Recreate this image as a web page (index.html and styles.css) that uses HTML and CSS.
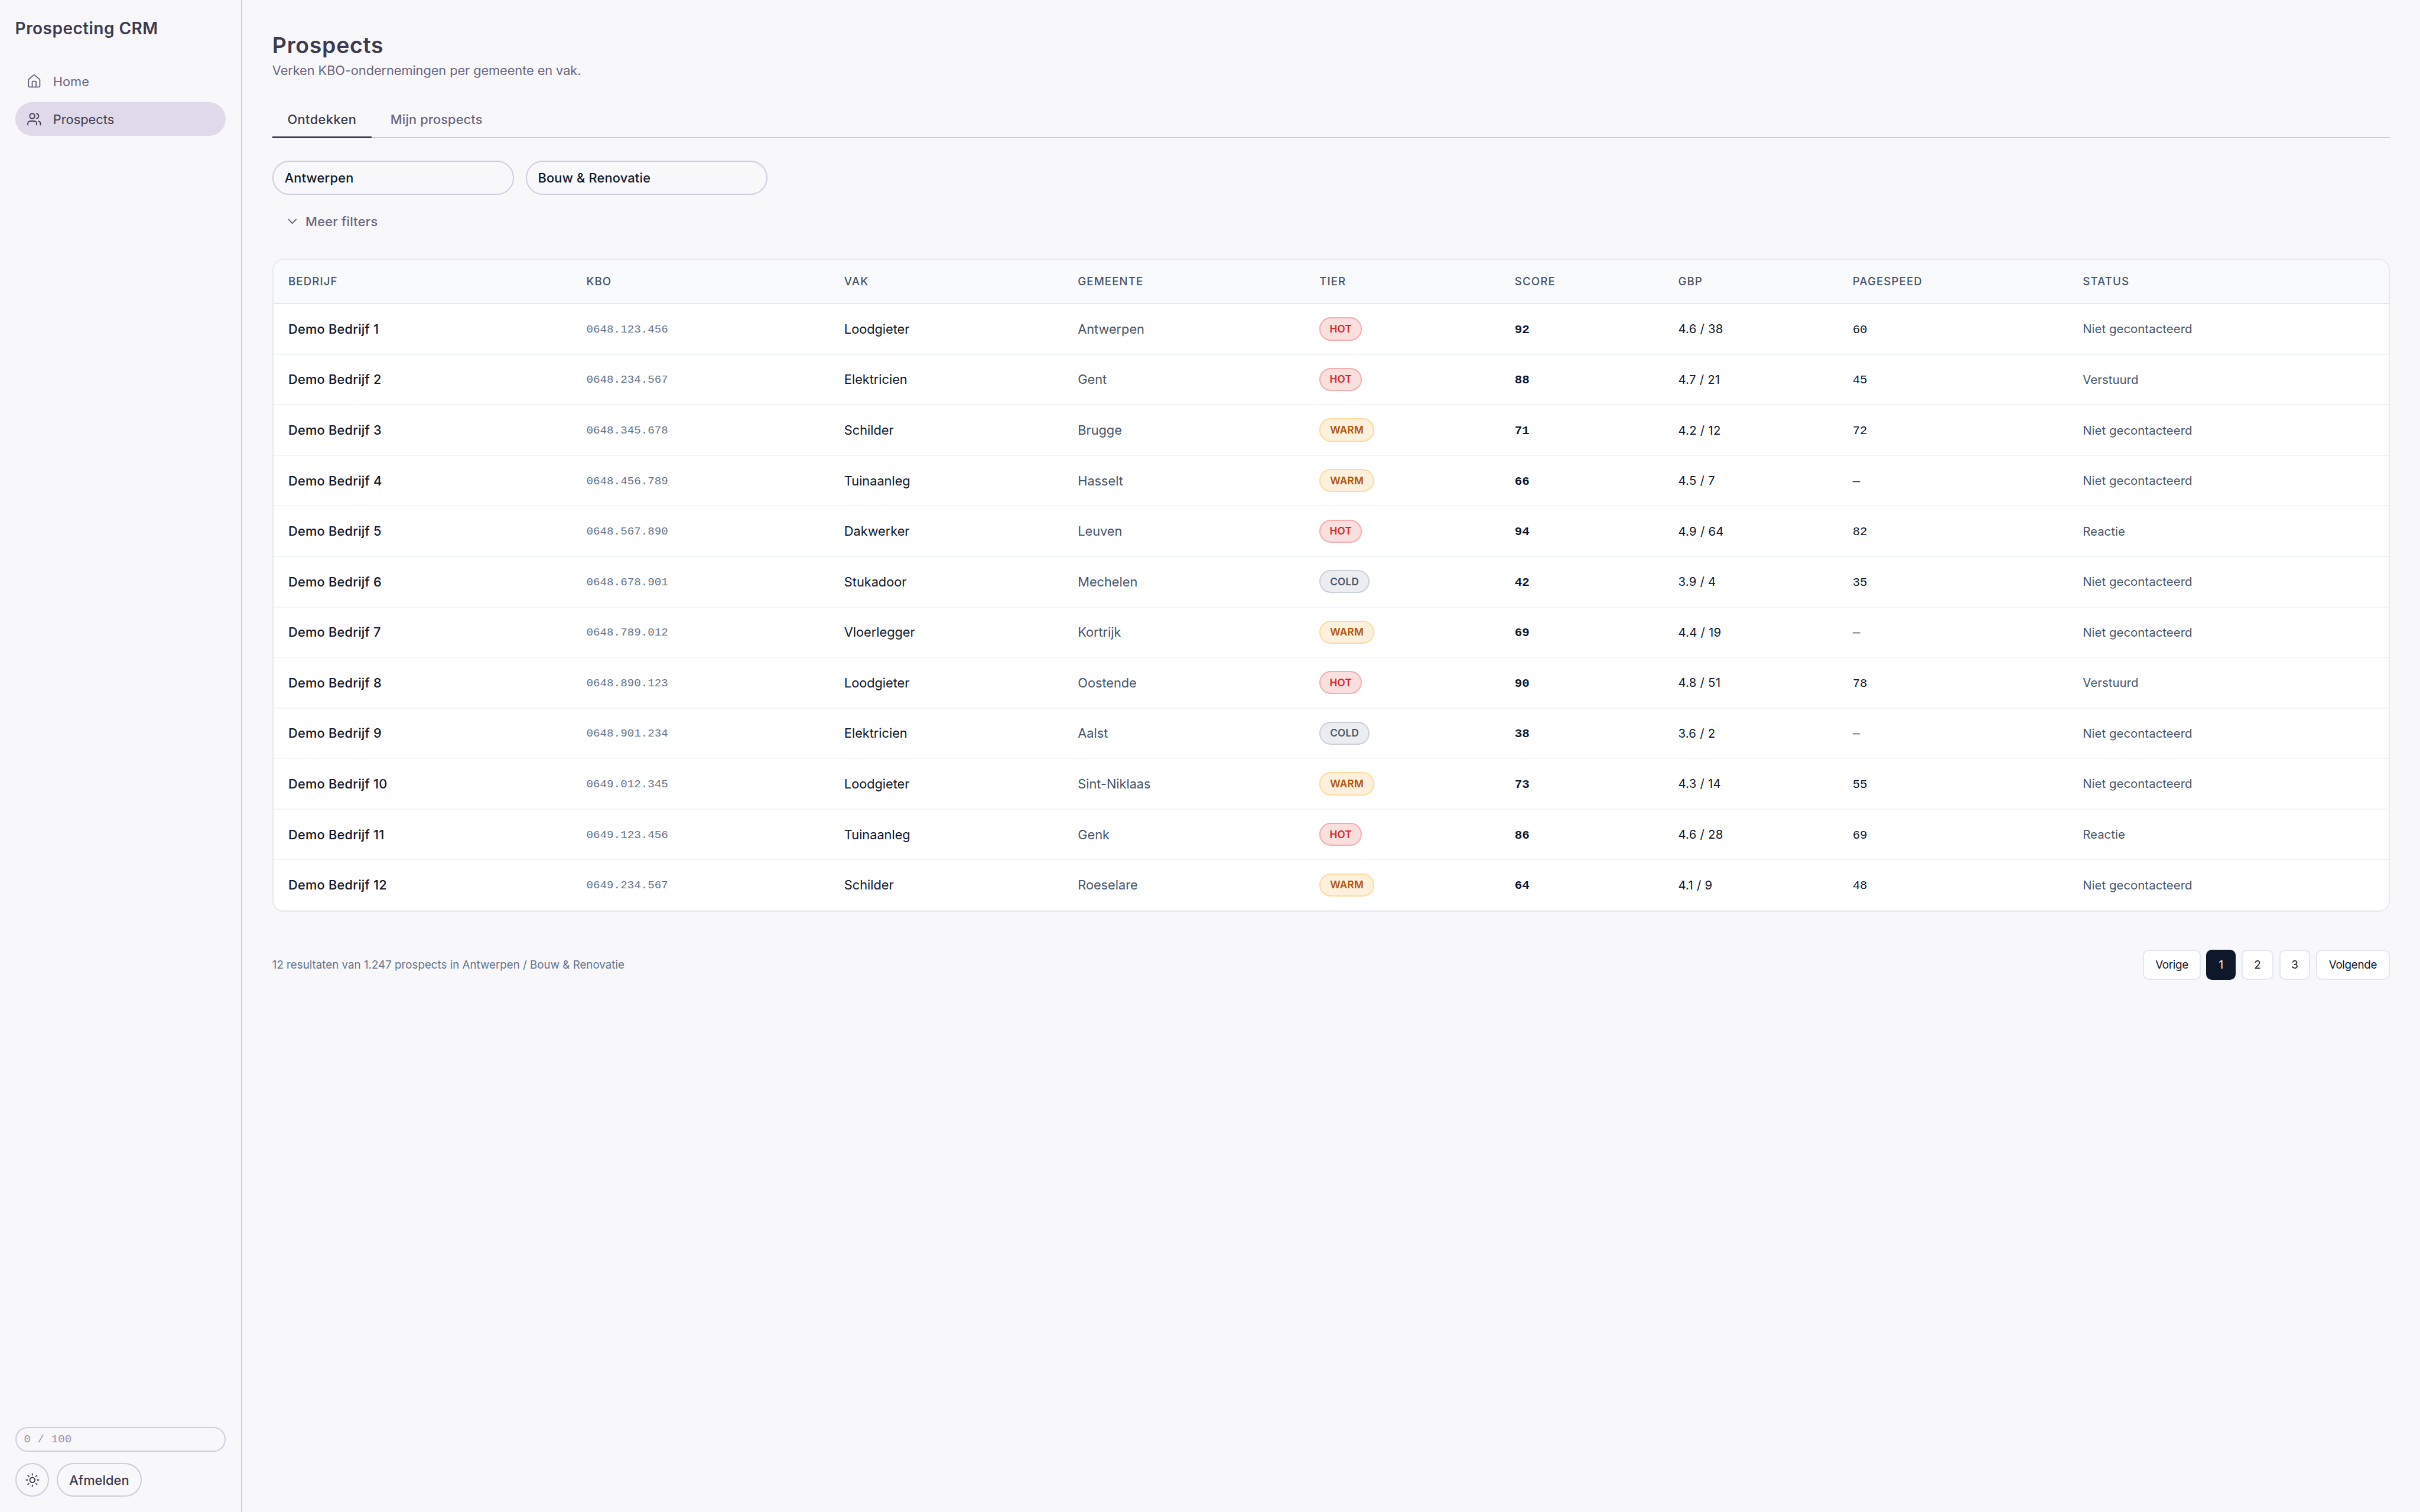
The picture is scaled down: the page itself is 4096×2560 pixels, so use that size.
FILE: index.html
```
<!DOCTYPE html>
<html lang="nl">
<head>
<meta charset="utf-8">
<title>Prospecting CRM</title>
<link rel="stylesheet" href="styles.css">
</head>
<body>
<div class="app">
  <aside class="sidebar">
    <div class="brand">Prospecting CRM</div>
    <nav class="nav">
      <a class="nav-item">
        <svg class="icon" viewBox="0 0 24 24"><path d="M15 21v-8a1 1 0 0 0-1-1h-4a1 1 0 0 0-1 1v8"/><path d="M3 10a2 2 0 0 1 .709-1.528l7-5.999a2 2 0 0 1 2.582 0l7 5.999A2 2 0 0 1 21 10v9a2 2 0 0 1-2 2H5a2 2 0 0 1-2-2z"/></svg>
        <span>Home</span>
      </a>
      <a class="nav-item nav-item--active">
        <svg class="icon" viewBox="0 0 24 24"><path d="M16 21v-2a4 4 0 0 0-4-4H6a4 4 0 0 0-4 4v2"/><circle cx="9" cy="7" r="4"/><path d="M22 21v-2a4 4 0 0 0-3-3.87"/><path d="M16 3.13a4 4 0 0 1 0 7.75"/></svg>
        <span>Prospects</span>
      </a>
    </nav>
    <div class="sidebar-foot">
      <div class="quota">0 / 100</div>
      <div class="actions">
        <button class="btn btn--round" aria-label="Thema">
          <svg class="icon" viewBox="0 0 24 24"><circle cx="12" cy="12" r="4"/><path d="M12 2v2M12 20v2M4.93 4.93l1.41 1.41M17.66 17.66l1.41 1.41M2 12h2M20 12h2M6.34 17.66l-1.41 1.41M19.07 4.93l-1.41 1.41"/></svg>
        </button>
        <button class="btn btn--logout">Afmelden</button>
      </div>
    </div>
  </aside>

  <main class="main">
    <h1 class="title">Prospects</h1>
    <p class="subtitle">Verken KBO-ondernemingen per gemeente en vak.</p>

    <div class="tabs">
      <div class="tab tab--active">Ontdekken</div>
      <div class="tab">Mijn prospects</div>
    </div>

    <div class="filters">
      <div class="select">Antwerpen</div>
      <div class="select">Bouw &amp; Renovatie</div>
    </div>
    <div class="more">
      <svg class="icon" viewBox="0 0 24 24"><path d="m6 9 6 6 6-6"/></svg>
      <span>Meer filters</span>
    </div>

    <section class="table">
      <div class="row row--head"><div>BEDRIJF</div><div>KBO</div><div>VAK</div><div>GEMEENTE</div><div>TIER</div><div>SCORE</div><div>GBP</div><div>PAGESPEED</div><div>STATUS</div></div>
      <div class="row"><div class="name">Demo Bedrijf 1</div><div class="kbo">0648.123.456</div><div class="vak">Loodgieter</div><div class="city">Antwerpen</div><div><span class="badge hot">HOT</span></div><div class="score">92</div><div class="gbp">4.6 / 38</div><div class="speed">60</div><div class="status">Niet gecontacteerd</div></div>
      <div class="row"><div class="name">Demo Bedrijf 2</div><div class="kbo">0648.234.567</div><div class="vak">Elektricien</div><div class="city">Gent</div><div><span class="badge hot">HOT</span></div><div class="score">88</div><div class="gbp">4.7 / 21</div><div class="speed">45</div><div class="status">Verstuurd</div></div>
      <div class="row"><div class="name">Demo Bedrijf 3</div><div class="kbo">0648.345.678</div><div class="vak">Schilder</div><div class="city">Brugge</div><div><span class="badge warm">WARM</span></div><div class="score">71</div><div class="gbp">4.2 / 12</div><div class="speed">72</div><div class="status">Niet gecontacteerd</div></div>
      <div class="row"><div class="name">Demo Bedrijf 4</div><div class="kbo">0648.456.789</div><div class="vak">Tuinaanleg</div><div class="city">Hasselt</div><div><span class="badge warm">WARM</span></div><div class="score">66</div><div class="gbp">4.5 / 7</div><div class="speed">—</div><div class="status">Niet gecontacteerd</div></div>
      <div class="row"><div class="name">Demo Bedrijf 5</div><div class="kbo">0648.567.890</div><div class="vak">Dakwerker</div><div class="city">Leuven</div><div><span class="badge hot">HOT</span></div><div class="score">94</div><div class="gbp">4.9 / 64</div><div class="speed">82</div><div class="status">Reactie</div></div>
      <div class="row"><div class="name">Demo Bedrijf 6</div><div class="kbo">0648.678.901</div><div class="vak">Stukadoor</div><div class="city">Mechelen</div><div><span class="badge cold">COLD</span></div><div class="score">42</div><div class="gbp">3.9 / 4</div><div class="speed">35</div><div class="status">Niet gecontacteerd</div></div>
      <div class="row"><div class="name">Demo Bedrijf 7</div><div class="kbo">0648.789.012</div><div class="vak">Vloerlegger</div><div class="city">Kortrijk</div><div><span class="badge warm">WARM</span></div><div class="score">69</div><div class="gbp">4.4 / 19</div><div class="speed">—</div><div class="status">Niet gecontacteerd</div></div>
      <div class="row"><div class="name">Demo Bedrijf 8</div><div class="kbo">0648.890.123</div><div class="vak">Loodgieter</div><div class="city">Oostende</div><div><span class="badge hot">HOT</span></div><div class="score">90</div><div class="gbp">4.8 / 51</div><div class="speed">78</div><div class="status">Verstuurd</div></div>
      <div class="row"><div class="name">Demo Bedrijf 9</div><div class="kbo">0648.901.234</div><div class="vak">Elektricien</div><div class="city">Aalst</div><div><span class="badge cold">COLD</span></div><div class="score">38</div><div class="gbp">3.6 / 2</div><div class="speed">—</div><div class="status">Niet gecontacteerd</div></div>
      <div class="row"><div class="name">Demo Bedrijf 10</div><div class="kbo">0649.012.345</div><div class="vak">Loodgieter</div><div class="city">Sint-Niklaas</div><div><span class="badge warm">WARM</span></div><div class="score">73</div><div class="gbp">4.3 / 14</div><div class="speed">55</div><div class="status">Niet gecontacteerd</div></div>
      <div class="row"><div class="name">Demo Bedrijf 11</div><div class="kbo">0649.123.456</div><div class="vak">Tuinaanleg</div><div class="city">Genk</div><div><span class="badge hot">HOT</span></div><div class="score">86</div><div class="gbp">4.6 / 28</div><div class="speed">69</div><div class="status">Reactie</div></div>
      <div class="row"><div class="name">Demo Bedrijf 12</div><div class="kbo">0649.234.567</div><div class="vak">Schilder</div><div class="city">Roeselare</div><div><span class="badge warm">WARM</span></div><div class="score">64</div><div class="gbp">4.1 / 9</div><div class="speed">48</div><div class="status">Niet gecontacteerd</div></div>
    </section>

    <footer class="footer">
      <div class="count">12 resultaten van 1.247 prospects in Antwerpen / Bouw &amp; Renovatie</div>
      <div class="pager">
        <button class="page page--prev">Vorige</button>
        <button class="page page--current">1</button>
        <button class="page page--two">2</button>
        <button class="page page--three">3</button>
        <button class="page page--next">Volgende</button>
      </div>
    </footer>
  </main>
</div>
</body>
</html>
```
FILE: styles.css
```
:root {
  --ink: #0f172a;
  --slate: #475569;
  --heading: #3d3a4e;
  --muted: #6b6680;
  --line: #cfccdd;
  --mono: "Liberation Mono", "Courier New", monospace;
}

* { box-sizing: border-box; margin: 0; padding: 0; }

body {
  background: #f8f8fb;
  font-family: Inter, "Liberation Sans", sans-serif;
  font-size: 21.85px;
  line-height: 32px;
  color: var(--ink);
  white-space: nowrap;
}

button { font: inherit; color: inherit; background: none; }

.app { display: flex; height: 2560px; }

.icon {
  flex: none;
  width: 25.6px;
  height: 25.6px;
  fill: none;
  stroke: currentColor;
  stroke-width: 1.75;
  stroke-linecap: round;
  stroke-linejoin: round;
}

/* Sidebar */
.sidebar {
  flex: none;
  display: flex;
  flex-direction: column;
  width: 409.6px;
  padding: 26px 25.2px 25.6px 25.6px;
  border-right: 2px solid var(--line);
}
.brand {
  font-size: 28.1px;
  font-weight: 600;
  line-height: 44.8px;
  letter-spacing: 0.015em;
  color: var(--heading);
}
.nav { display: flex; flex-direction: column; gap: 6.4px; margin-top: 38px; }
.nav-item {
  display: flex;
  align-items: center;
  gap: 19.4px;
  height: 57.6px;
  padding-left: 19.2px;
  border-radius: 28.8px;
  color: var(--muted);
}
.nav-item--active { background: #dedaea; color: var(--heading); }
.sidebar-foot { display: flex; flex-direction: column; gap: 19.2px; margin-top: auto; }
.quota {
  display: flex;
  align-items: center;
  height: 41.6px;
  padding-left: 13px;
  border: 2px solid #cfcdd9;
  border-radius: 20.8px;
  font: 19.2px/24px var(--mono);
  color: #9895aa;
}
.actions { display: flex; gap: 12.8px; }
.btn {
  display: flex;
  align-items: center;
  justify-content: center;
  height: 57.6px;
  border: 2px solid var(--line);
  border-radius: 28.8px;
  color: var(--heading);
}
.btn--round { width: 57.6px; }
.btn--logout { width: 144px; font-weight: 550; letter-spacing: 0.002em; }

/* Page header */
.main { flex: 1; padding: 51px 51.2px 0; }
.title {
  font-size: 37.5px;
  font-weight: 600;
  line-height: 51.2px;
  letter-spacing: 0.0175em;
  color: var(--heading);
}
.subtitle { margin-top: 1px; letter-spacing: -0.005em; color: var(--muted); }

.tabs {
  display: flex;
  gap: 6.4px;
  height: 67.2px;
  margin-top: 31.2px;
  box-shadow: inset 0 -2px var(--line);
}
.tab {
  display: flex;
  align-items: center;
  padding: 3.3px 25.6px 0;
  font-weight: 500;
  letter-spacing: 0.0046em;
  color: var(--muted);
}
.tab--active {
  width: 168px;
  letter-spacing: 0.0185em;
  color: var(--heading);
  box-shadow: inset 0 -3px var(--heading);
}

/* Filters */
.filters { display: flex; gap: 19.2px; margin-top: 38.4px; }
.select {
  display: flex;
  align-items: center;
  width: 409.6px;
  height: 57.6px;
  padding-left: 18.9px;
  border: 2px solid var(--line);
  border-radius: 28.8px;
  font-weight: 500;
  letter-spacing: 0.008em;
}
.more {
  display: flex;
  align-items: center;
  gap: 9.8px;
  height: 57.6px;
  margin-top: 16px;
  padding: 1px 0 0 20.8px;
  font-weight: 500;
  letter-spacing: 0.0102em;
  color: var(--muted);
}

/* Table */
.table {
  margin-top: 35.2px;
  border: 2px solid #e7e9ed;
  border-radius: 19.2px;
  background: #fff;
  overflow: hidden;
}
.row {
  display: grid;
  grid-template-columns: 504.6px 436.3px 395.4px 409px 330.6px 276.6px 295.2px 389.6px 1fr;
  align-items: center;
  height: 85.57px;
  padding-left: 25.2px;
  border-bottom: 2px solid #f1f5f9;
}
.row--head {
  height: 74.8px;
  border-bottom-color: #e2e8f0;
  background: #f8fafc;
  font-size: 18.75px;
  font-weight: 500;
  letter-spacing: 0.056em;
  color: var(--slate);
}
.name { font-weight: 500; letter-spacing: 0.009em; }
.kbo { padding-top: 2px; font: 19.2px/24px var(--mono); color: #64748b; }
.vak, .city { letter-spacing: -0.003em; }
.city, .status { color: var(--slate); }
.score, .speed { padding-top: 4px; font: 20.8px/26px var(--mono); }
.score { font-weight: 700; }
.gbp { font-size: 20.3px; letter-spacing: 0.013em; }
.gbp, .status { padding-top: 1px; }
.status { font-size: 20.3px; letter-spacing: 0.0039em; }

.badge {
  display: flex;
  align-items: center;
  justify-content: center;
  height: 39.2px;
  border: 2px solid;
  border-radius: 19.6px;
  font-size: 17.2px;
  font-weight: 600;
  letter-spacing: 0.015em;
}
.hot { width: 72px; background: #fadfdf; border-color: #f3aeb0; color: #dc2626; }
.warm { width: 92.8px; background: #fdf0dc; border-color: #fbdc9d; color: #b45309; }
.cold { width: 84.8px; background: #ecedf1; border-color: #cad0d8; color: var(--slate); }

/* Footer */
.footer {
  display: flex;
  align-items: center;
  justify-content: space-between;
  margin-top: 64px;
  font-size: 18.75px;
}
.count { padding-top: 2px; color: #64748b; }
.pager { display: flex; gap: 9.6px; }
.page {
  height: 51.2px;
  padding-top: 1px;
  border: 2px solid #e2e8f0;
  border-radius: 9.6px;
  background: #fff;
  letter-spacing: -0.015em;
}
.page--prev { width: 97.6px; }
.page--current { width: 49.6px; background: var(--ink); border-color: var(--ink); color: #f8fafc; }
.page--two { width: 54.4px; }
.page--three { width: 52.8px; }
.page--next { width: 124.8px; }
```
